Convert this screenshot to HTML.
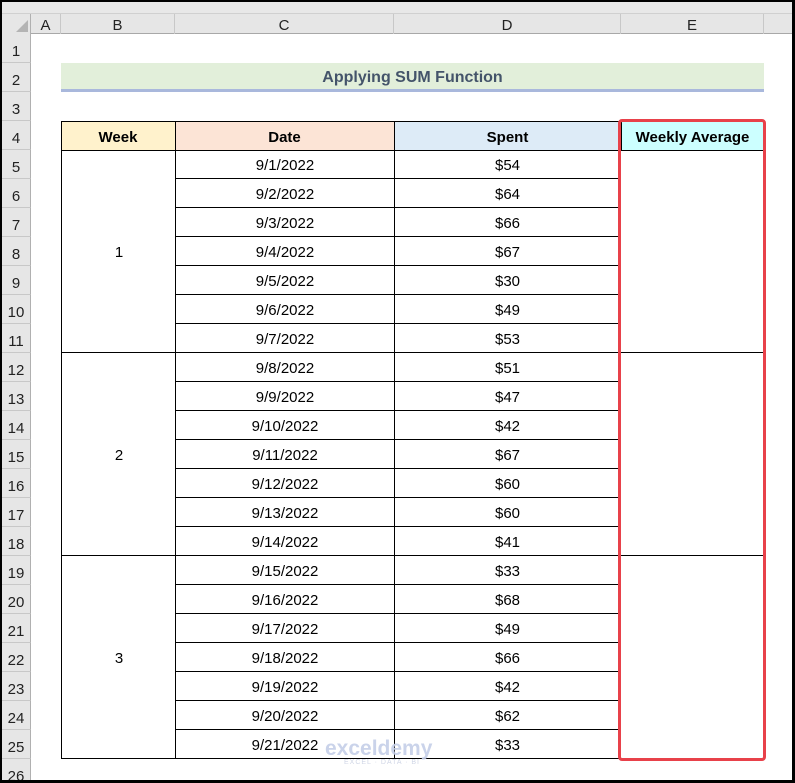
<!DOCTYPE html>
<html><head><meta charset="utf-8"><style>
*{margin:0;padding:0;box-sizing:border-box}
body{width:795px;height:783px;background:#000;position:relative;overflow:hidden;font-family:"Liberation Sans",Arial,sans-serif}
#sheet{position:absolute;left:2px;top:2px;width:790px;height:778px;background:#fff;overflow:hidden}
.a{position:absolute}
.hdr{background:#e6e6e6}
.c{position:absolute;display:flex;align-items:center;justify-content:center;font-size:15px;color:#000;padding-top:3px}
.rh{position:absolute;left:0;width:29px;height:29px;display:flex;align-items:flex-end;justify-content:center;padding-bottom:2px;font-size:15px;color:#222;border-bottom:1px solid #c8c8c8;border-right:1px solid #b0b0b0;background:#e6e6e6}
.ch{position:absolute;top:12px;height:20px;display:flex;align-items:center;justify-content:center;font-size:15px;color:#222;border-right:1px solid #c8c8c8;padding-top:2px}
</style></head><body><div id="sheet">
<div class="a hdr" style="left:0;top:0;width:790px;height:12px;background:#e8e8e8"></div>
<div class="a" style="left:0;top:0;width:790px;height:12px;border-bottom:1px solid #d0d0d0"></div>
<div class="a hdr" style="left:0;top:12px;width:790px;height:20px;border-bottom:1px solid #a8a8a8"></div>
<div class="a hdr" style="left:0;top:12px;width:29px;height:20px;border-right:1px solid #b0b0b0"></div>
<svg class="a" style="left:14px;top:18px" width="12" height="12"><polygon points="12,0 12,12 0,12" fill="#b4b4b4"/></svg>
<div class="ch" style="left:29px;width:30px">A</div>
<div class="ch" style="left:59px;width:114px">B</div>
<div class="ch" style="left:173px;width:219px">C</div>
<div class="ch" style="left:392px;width:227px">D</div>
<div class="ch" style="left:619px;width:143px">E</div>
<div id="rows"></div>
<div class="a" style="left:59px;top:61px;width:703px;height:29px;background:#e2efda;border-bottom:3px solid #a9b8dc"></div>
<div class="c" style="left:59px;top:61px;width:703px;height:27px;font-weight:bold;color:#44546a;font-size:16px">Applying SUM Function</div>
<div class="c" style="left:59px;top:119px;width:114px;height:29px;background:#fff2cc;font-weight:bold">Week</div>
<div class="c" style="left:173px;top:119px;width:219px;height:29px;background:#fce4d6;font-weight:bold">Date</div>
<div class="c" style="left:392px;top:119px;width:227px;height:29px;background:#ddebf7;font-weight:bold">Spent</div>
<div class="c" style="left:619px;top:119px;width:143px;height:29px;background:#ccffff;font-weight:bold">Weekly Average</div>
<div id="tbl"></div>
<div class="a" style="left:616px;top:117px;width:148px;height:642px;border:3px solid #e8414a;border-radius:4px"></div>
<div class="a" style="left:323px;top:735px;font-size:21px;font-weight:bold;color:#c5cfe8;opacity:.9">exceldemy</div>
<div class="a" style="left:342px;top:757px;font-size:7px;color:#d0d6e6;letter-spacing:1px">EXCEL · DATA · BI</div>
</div>
<script>
var r=document.getElementById('rows'),h='';
for(var i=1;i<=26;i++){h+='<div class="rh" style="top:'+(32+(i-1)*29)+'px">'+i+'</div>';}
r.innerHTML=h;
var d=[54,64,66,67,30,49,53,51,47,42,67,60,60,41,33,68,49,66,42,62,33],t='';
for(var k=0;k<21;k++){var y=148+k*29;
t+='<div class="c" style="left:173px;top:'+y+'px;width:219px;height:29px;border-left:1px solid #000;border-bottom:1px solid #000">9/'+(k+1)+'/2022</div>';
t+='<div class="c" style="left:392px;top:'+y+'px;width:227px;height:29px;border-left:1px solid #000;border-right:1px solid #000;border-bottom:1px solid #000">$'+d[k]+'</div>';}
for(var w=0;w<3;w++){var y=148+w*203;
t+='<div class="c" style="left:59px;top:'+y+'px;width:115px;height:203px;border-left:1px solid #000;border-bottom:1px solid #000">'+(w+1)+'</div>';
t+='<div class="a" style="left:619px;top:'+y+'px;width:143px;height:203px;border-right:1px solid #000;border-bottom:1px solid #000"></div>';}
t+='<div class="a" style="left:59px;top:119px;width:704px;height:638px;border:1px solid #000"></div>';
t+='<div class="a" style="left:59px;top:148px;width:704px;height:1px;background:#000"></div>';
t+='<div class="a" style="left:173px;top:119px;width:1px;height:29px;background:#000"></div><div class="a" style="left:392px;top:119px;width:1px;height:29px;background:#000"></div><div class="a" style="left:619px;top:119px;width:1px;height:29px;background:#000"></div>';
document.getElementById('tbl').innerHTML=t;
</script>
</body></html>
